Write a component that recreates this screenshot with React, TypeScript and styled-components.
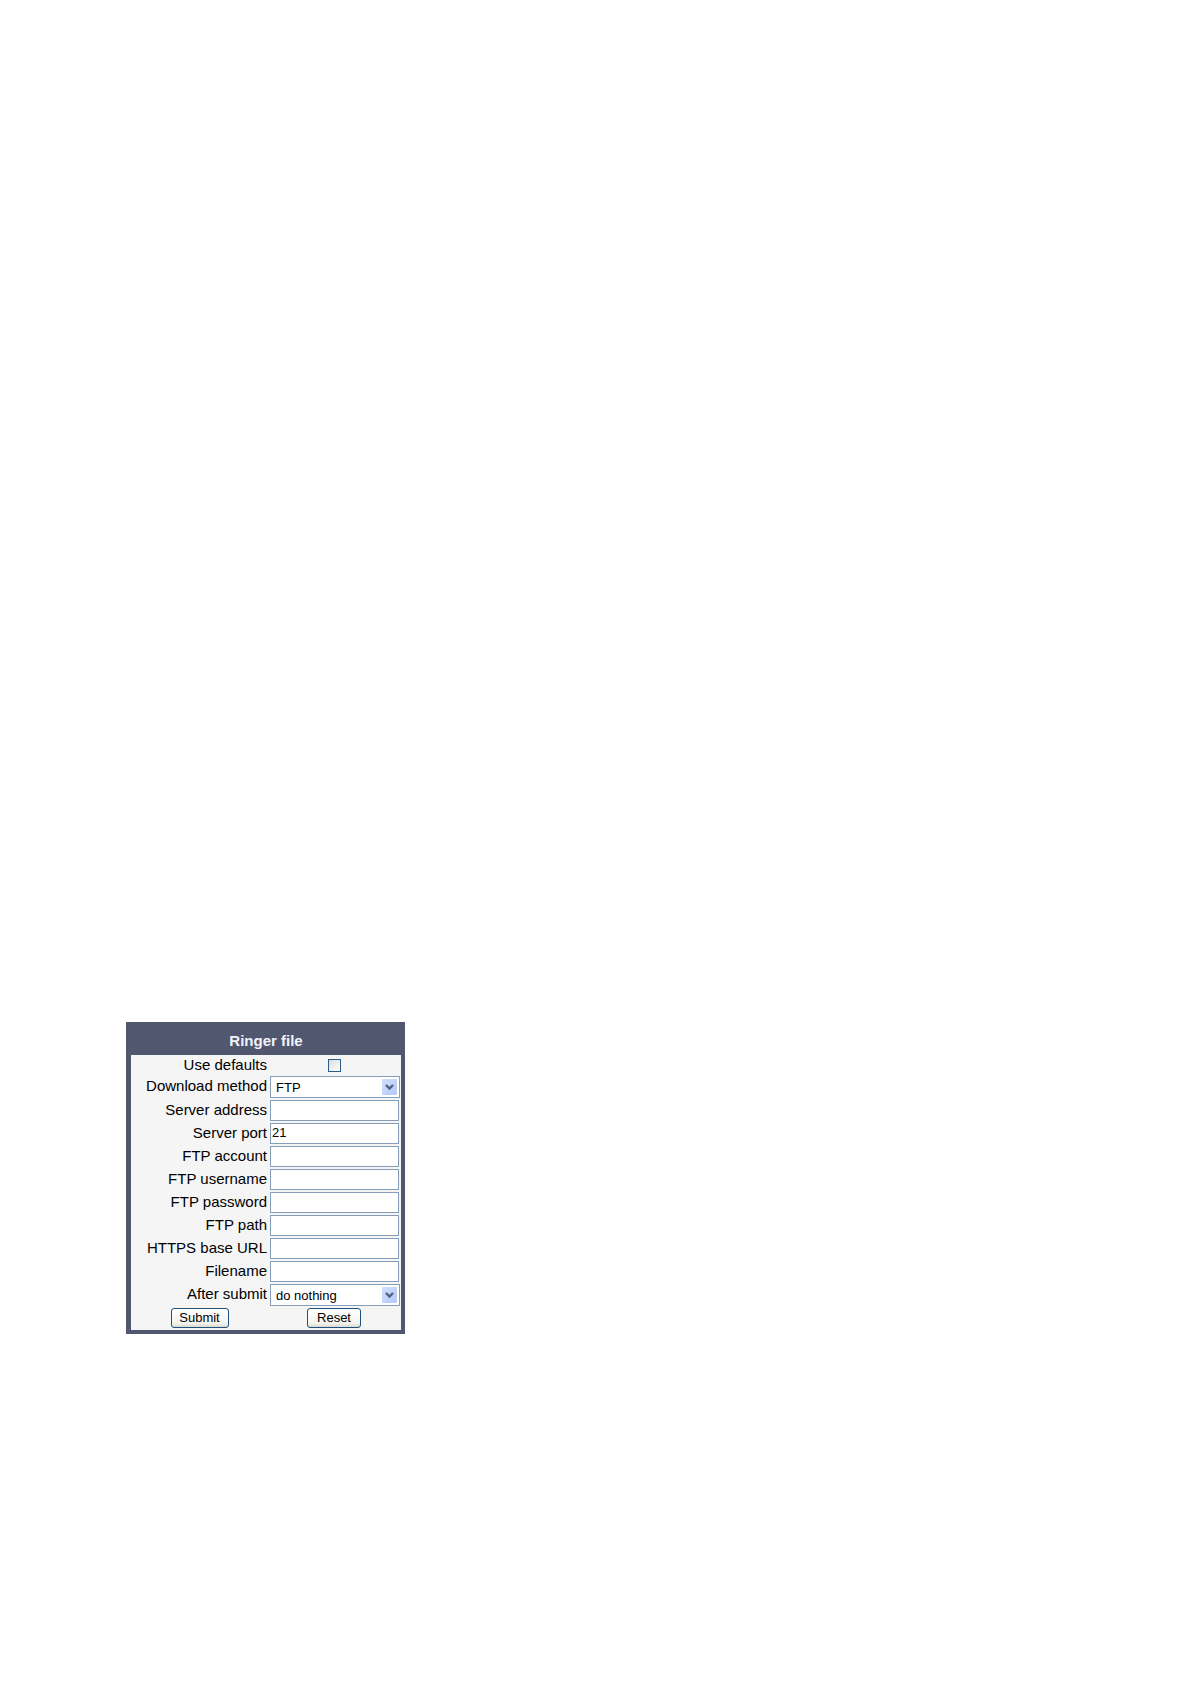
import React from 'react';
import styled, { createGlobalStyle } from 'styled-components';

const GlobalStyle = createGlobalStyle`
  *, *::before, *::after {
    box-sizing: border-box;
  }

  body {
    margin: 0;
    background: #ffffff;
    color: #000000;
    font-family: 'Liberation Sans', Arial, sans-serif;
  }
`;

const Page = styled.main`
  display: flex;
  align-items: flex-start;
  min-height: 100vh;
  padding: 1022px 24px 40px 126px;
`;

const Panel = styled.form`
  padding: 0 4px 4px 5px;
  background: #525770;
`;

const PanelTitle = styled.h1`
  margin: 0;
  padding-top: 4px;
  color: #f0f3fb;
  font-size: 15px;
  font-weight: bold;
  line-height: 29px;
  text-align: center;
`;

const PanelBody = styled.div`
  padding-right: 1px;
  background: #f5f5f6;
`;

const Row = styled.div<{ $height?: number }>`
  display: grid;
  grid-template-columns: 136px 130px;
  column-gap: 3px;
  align-items: start;
  height: ${({ $height }) => $height ?? 23}px;
`;

const Label = styled.label`
  font-size: 15px;
  line-height: 20px;
  text-align: right;
  white-space: nowrap;
`;

const CheckBox = styled.input`
  appearance: none;
  justify-self: center;
  align-self: center;
  width: 13px;
  height: 13px;
  margin: 0 2px 0 0;
  border: 1px solid #2b5b88;
  background: linear-gradient(135deg, #dcdcd8, #ffffff);

  &:checked {
    background: #21a121;
  }
`;

const TextBox = styled.input`
  width: 129px;
  height: 21px;
  margin: 0;
  padding: 0 1px 2px;
  border: 1px solid #849db9;
  border-radius: 0;
  background: #ffffff;
  color: #000000;
  font-family: inherit;
  font-size: 13px;
`;

const SelectFrame = styled.div`
  position: relative;
  height: 22px;
`;

const Select = styled.select`
  appearance: none;
  width: 100%;
  height: 100%;
  margin: 0;
  padding: 0 20px 0 5px;
  border: 1px solid #849db9;
  border-radius: 0;
  background: #ffffff;
  color: #000000;
  font-family: inherit;
  font-size: 13px;
`;

const Arrow = styled.svg`
  position: absolute;
  top: 3px;
  right: 3px;
  pointer-events: none;
`;

const Actions = styled.div`
  display: grid;
  grid-template-columns: 137px 132px;
  justify-items: center;
  height: 23px;
  margin-right: -1px;
  padding-top: 1px;
`;

const Button = styled.button<{ $width: number }>`
  width: ${({ $width }) => $width}px;
  height: 20px;
  padding: 0;
  border: 1px solid #1c5180;
  border-radius: 3px;
  background: linear-gradient(#ffffff, #f3f3ee 80%, #dcd8cc);
  color: #000000;
  font-family: inherit;
  font-size: 13px;
  line-height: 18px;
`;

type DropDownProps = {
  id: string;
  options: string[];
};

const DropDown: React.FC<DropDownProps> = ({ id, options }) => (
  <SelectFrame>
    <Select id={id} name={id}>
      {options.map((option) => (
        <option key={option}>{option}</option>
      ))}
    </Select>
    <Arrow width="15" height="16" viewBox="0 0 15 16" aria-hidden="true">
      <defs>
        <linearGradient id={`${id}-fill`} x1="0" y1="0" x2="1" y2="1">
          <stop offset="0" stopColor="#d3dffc" />
          <stop offset="1" stopColor="#b4c8f6" />
        </linearGradient>
      </defs>
      <rect width="15" height="16" rx="1" fill={`url(#${id}-fill)`} />
      <path d="M4 6l3.5 3.5L11 6" fill="none" stroke="#4d6185" strokeWidth="2.4" />
    </Arrow>
  </SelectFrame>
);

const textFields = [
  { id: 'server-address', label: 'Server address' },
  { id: 'server-port', label: 'Server port', value: '21' },
  { id: 'ftp-account', label: 'FTP account' },
  { id: 'ftp-username', label: 'FTP username' },
  { id: 'ftp-password', label: 'FTP password', type: 'password' },
  { id: 'ftp-path', label: 'FTP path' },
  { id: 'https-base-url', label: 'HTTPS base URL' },
  { id: 'filename', label: 'Filename' },
];

const App: React.FC = () => {
  return (
    <>
      <GlobalStyle />
      <Page>
        <Panel onSubmit={(event) => event.preventDefault()}>
          <PanelTitle>Ringer file</PanelTitle>
          <PanelBody>
            <Row $height={21}>
              <Label htmlFor="use-defaults">Use defaults</Label>
              <CheckBox id="use-defaults" type="checkbox" />
            </Row>
            <Row $height={24}>
              <Label htmlFor="download-method">Download method</Label>
              <DropDown id="download-method" options={['FTP', 'HTTPS']} />
            </Row>
            {textFields.map(({ id, label, value, type }) => (
              <Row key={id}>
                <Label htmlFor={id}>{label}</Label>
                <TextBox id={id} name={id} type={type ?? 'text'} defaultValue={value} />
              </Row>
            ))}
            <Row>
              <Label htmlFor="after-submit">After submit</Label>
              <DropDown id="after-submit" options={['do nothing', 'restart']} />
            </Row>
            <Actions>
              <Button type="submit" $width={58}>Submit</Button>
              <Button type="reset" $width={54}>Reset</Button>
            </Actions>
          </PanelBody>
        </Panel>
      </Page>
    </>
  );
};

export default App;
